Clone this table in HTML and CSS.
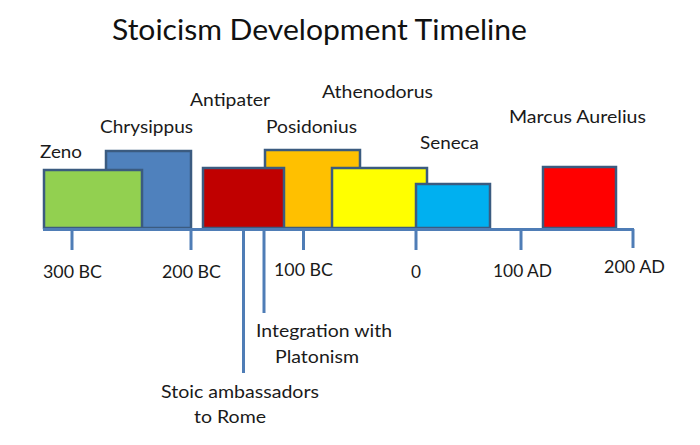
FILE: index.html
```html
<!DOCTYPE html>
<html lang="en">
<head>
<meta charset="utf-8">
<title>Stoicism Development Timeline</title>
<link rel="stylesheet" href="styles.css">
</head>
<body>
<main class="page">
<svg class="chart" width="700" height="445" viewBox="0 0 700 445" xmlns="http://www.w3.org/2000/svg">
  <text class="title" x="112" y="40" textLength="415" lengthAdjust="spacingAndGlyphs">Stoicism Development Timeline</text>

  <g class="boxes">
    <rect class="box blue" x="106" y="151" width="85" height="77"/>
    <rect class="box green" x="44" y="170" width="98" height="58"/>
    <rect class="box orange" x="265" y="150" width="95" height="78"/>
    <rect class="box darkred" x="203" y="168" width="81" height="60"/>
    <rect class="box yellow" x="332" y="168" width="95" height="60"/>
    <rect class="box cyan" x="416" y="184" width="74" height="44"/>
    <rect class="box red" x="543" y="167" width="73" height="61"/>
  </g>

  <g class="axis">
    <line x1="43" y1="229.5" x2="634" y2="229.5"/>
    <line x1="72" y1="229" x2="72" y2="250"/>
    <line x1="191" y1="229" x2="191" y2="250"/>
    <line x1="303.5" y1="229" x2="303.5" y2="250"/>
    <line x1="416" y1="229" x2="416" y2="250"/>
    <line x1="521" y1="229" x2="521" y2="250"/>
    <line x1="633" y1="229" x2="633" y2="248"/>
    <line x1="243.5" y1="229" x2="243.5" y2="373"/>
    <line x1="264" y1="229" x2="264" y2="313"/>
  </g>

  <g class="labels">
    <text x="40" y="158" textLength="42" lengthAdjust="spacingAndGlyphs">Zeno</text>
    <text x="100" y="133" textLength="93" lengthAdjust="spacingAndGlyphs">Chrysippus</text>
    <text x="190" y="106" textLength="80" lengthAdjust="spacingAndGlyphs">Antipater</text>
    <text x="266" y="133" textLength="91" lengthAdjust="spacingAndGlyphs">Posidonius</text>
    <text x="322" y="98" textLength="111" lengthAdjust="spacingAndGlyphs">Athenodorus</text>
    <text x="509" y="123" textLength="137" lengthAdjust="spacingAndGlyphs">Marcus Aurelius</text>
    <text x="420" y="149" textLength="59" lengthAdjust="spacingAndGlyphs">Seneca</text>

    <text x="43" y="278" textLength="59" lengthAdjust="spacingAndGlyphs">300 BC</text>
    <text x="162" y="278" textLength="59" lengthAdjust="spacingAndGlyphs">200 BC</text>
    <text x="274" y="276" textLength="59" lengthAdjust="spacingAndGlyphs">100 BC</text>
    <text x="411" y="278" textLength="10" lengthAdjust="spacingAndGlyphs">0</text>
    <text x="493" y="277" textLength="59" lengthAdjust="spacingAndGlyphs">100 AD</text>
    <text x="604" y="273" textLength="61" lengthAdjust="spacingAndGlyphs">200 AD</text>

    <text x="256" y="337" textLength="136" lengthAdjust="spacingAndGlyphs">Integration with</text>
    <text x="275" y="362.5" textLength="84" lengthAdjust="spacingAndGlyphs">Platonism</text>
    <text x="161" y="397.5" textLength="158" lengthAdjust="spacingAndGlyphs">Stoic ambassadors</text>
    <text x="194" y="422.5" textLength="72" lengthAdjust="spacingAndGlyphs">to Rome</text>
  </g>
</svg>
</main>
</body>
</html>
```

FILE: styles.css
```css
html, body {
  margin: 0;
  padding: 0;
  background: #ffffff;
}

.page {
  width: 700px;
  height: 445px;
  overflow: hidden;
}

.chart {
  display: block;
  font-family: Lato, "Open Sans", "Liberation Sans", sans-serif;
}

.title {
  font-size: 28px;
  fill: #111111;
}

.labels text {
  font-size: 18px;
  fill: #1a1a1a;
}

.box {
  stroke: #3b5b80;
  stroke-width: 2.5;
}

.blue { fill: #4f81bd; }
.green { fill: #92d050; }
.orange { fill: #ffc000; }
.darkred { fill: #c00000; }
.yellow { fill: #ffff00; }
.cyan { fill: #00b0f0; }
.red { fill: #ff0000; }

.axis line {
  stroke: #4f7db6;
  stroke-width: 3;
}
```
